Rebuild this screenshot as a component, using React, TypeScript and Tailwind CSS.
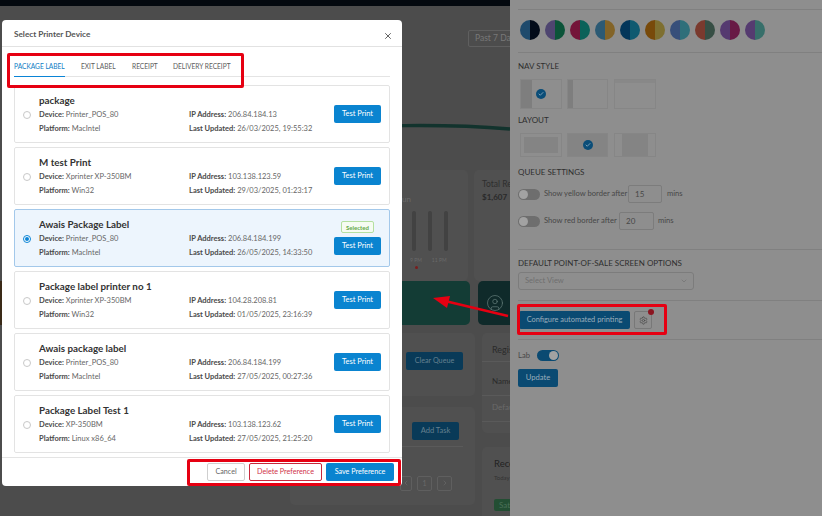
import { Check, ChevronDown, ChevronLeft, ChevronRight, CircleUser, Settings, X } from 'lucide-react';

const printers = [
  { name: 'package', device: 'Printer_POS_80', platform: 'MacIntel', ip: '206.84.184.13', updated: '26/03/2025, 19:55:32' },
  { name: 'M test Print', device: 'Xprinter XP-350BM', platform: 'Win32', ip: '103.138.123.59', updated: '29/03/2025, 01:23:17' },
  { name: 'Awais Package Label', device: 'Printer_POS_80', platform: 'MacIntel', ip: '206.84.184.199', updated: '26/05/2025, 14:33:50', selected: true },
  { name: 'Package label printer no 1', device: 'Xprinter XP-350BM', platform: 'Win32', ip: '104.28.208.81', updated: '01/05/2025, 23:16:39' },
  { name: 'Awais package label', device: 'Printer_POS_80', platform: 'MacIntel', ip: '206.84.184.199', updated: '27/05/2025, 00:27:36' },
  { name: 'Package Label Test 1', device: 'XP-350BM', platform: 'Linux x86_64', ip: '103.138.123.62', updated: '27/05/2025, 21:25:20' },
];

const swatches = [
  ['#1e4a6c', '#030b1a'],
  ['#4e4570', '#0b5439'],
  ['#741439', '#0a6259'],
  ['#2c5a74', '#836428'],
  ['#03365a', '#0f5a70'],
  ['#784a0a', '#7e6f30'],
  ['#374f7a', '#2f6f7a'],
  ['#7a3a2e', '#374f45'],
  ['#553a70', '#681a45'],
  ['#553b70', '#376f6a'],
];

function Field({ label, value }: { label: string; value: string }) {
  return (
    <div className="h-[14px] leading-[14px] whitespace-nowrap text-[7.5px] text-[#666]">
      <span className="font-bold text-[#4a4a4a]">{label}:</span> {value}
    </div>
  );
}

function PrinterCard({ p }: { p: (typeof printers)[number] }) {
  return (
    <div
      className={`h-[58px] shrink-0 flex items-center rounded-[2px] border pl-[8px] pr-[8px] ${
        p.selected ? 'bg-[#edf5fd] border-[#a3c8ea]' : 'bg-white border-[#e3e3e3]'
      }`}
    >
      <div
        className={`w-[8px] h-[8px] rounded-full shrink-0 mt-[2px] flex items-center justify-center ${
          p.selected ? 'border border-[#0a84d6] bg-white' : 'border border-[#c8c8c8]'
        }`}
      >
        {p.selected && <div className="w-[4px] h-[4px] rounded-full bg-[#0a84d6]" />}
      </div>
      <div className="ml-[8px] w-[150px] shrink-0">
        <div className="h-[15px] leading-[14px] text-[9.8px] font-bold text-[#333] whitespace-nowrap">{p.name}</div>
        <Field label="Device" value={p.device} />
        <Field label="Platform" value={p.platform} />
      </div>
      <div className="pt-[15px] w-[145px] shrink-0">
        <Field label="IP Address" value={p.ip} />
        <Field label="Last Updated" value={p.updated} />
      </div>
      <div className="w-[47px] shrink-0 flex flex-col items-center">
        {p.selected && (
          <div className="w-[33px] h-[12px] mb-[4px] rounded-[2px] border border-[#b5e0a0] bg-[#f6fcf2] text-[6px] font-bold text-[#62a845] flex items-center justify-center">
            Selected
          </div>
        )}
        <button className="w-[47px] h-[18px] rounded-[2px] bg-[#0a84d0] text-white text-[7.5px]">Test Print</button>
      </div>
    </div>
  );
}

function Toggle({ on }: { on?: boolean }) {
  return (
    <div className={`w-[22px] h-[11px] rounded-full flex items-center px-[1px] ${on ? 'bg-[#0a4a72] justify-end' : 'bg-[#6e6e6e]'}`}>
      <div className="w-[9px] h-[9px] rounded-full bg-[#a2a2a2]" />
    </div>
  );
}

function CheckDot() {
  return (
    <div className="w-[10px] h-[10px] rounded-full bg-[#0a4d78] flex items-center justify-center">
      <Check size={6} strokeWidth={3} className="text-[#9fb9ca]" />
    </div>
  );
}

function Dashboard() {
  return (
    <div className="w-[510px] h-[516px] shrink-0 overflow-hidden flex flex-col bg-[#4c4c4c] text-[#2c2c2c]">
      <div className="h-[6px] shrink-0 bg-[#04090f]" />
      <div className="ml-[468px] mt-[24px] w-[70px] h-[17px] shrink-0 rounded-[2px] border border-[#5f5f5f] pl-[6px] text-[8.5px] leading-[15px] text-[#787878] whitespace-nowrap">
        Past 7 Days
      </div>
      <svg className="mt-[53px] shrink-0" width="510" height="60" viewBox="0 0 510 60">
        <path d="M300 32 C 360 24, 450 24, 510 29" fill="none" stroke="#12332d" strokeWidth="3.5" />
      </svg>

      <div className="mt-[10px] h-[111px] shrink-0 flex gap-[6px] ml-[290px]">
        <div className="w-[178px] shrink-0 rounded-[5px] bg-[#505050] pl-[112px] pt-[24px]">
          <div className="h-[10px] text-[8px] leading-[10px] text-[#6a6a6a]">un</div>
          <div className="mt-[7px] flex gap-[12px] pl-[10px]">
            <div className="w-[4px] h-[40px] rounded-full bg-[#424242]" />
            <div className="w-[4px] h-[40px] rounded-full bg-[#424242]" />
            <div className="w-[4px] h-[40px] rounded-full bg-[#424242]" />
          </div>
          <div className="mt-[6px] flex gap-[10px] pl-[8px] text-[5px] text-[#6a6a6a] whitespace-nowrap">
            <span>9 PM</span>
            <span>11 PM</span>
          </div>
          <div className="w-[3px] h-[3px] ml-[13px] mt-[1px] rounded-full bg-[#7a1c1c]" />
        </div>
        <div className="w-[120px] shrink-0 rounded-[5px] bg-[#505050] pl-[8px] pt-[9px]">
          <div className="text-[8.5px] leading-[11px] text-[#2e2e2e] whitespace-nowrap">Total Revenue</div>
          <div className="mt-[2px] text-[8px] leading-[11px] font-bold text-[#2a2a2a]">$1,607</div>
        </div>
      </div>

      <div className="h-[44px] shrink-0 flex">
        <div className="w-[2px] h-[44px] shrink-0 bg-[#3a2a18]" />
        <div className="ml-[288px] w-[180px] shrink-0 rounded-[5px] bg-[#133c35]" />
        <div className="ml-[8px] w-[60px] shrink-0 rounded-[5px] bg-[#0f2a2a] pl-[8px] flex items-center">
          <CircleUser size={18} strokeWidth={1} className="text-[#5f7876]" />
        </div>
      </div>

      <div className="mt-[8px] flex gap-[7px] ml-[290px]">
        <div className="w-[185px] shrink-0 flex flex-col">
          <div className="h-[63px] rounded-[5px] bg-[#505050] pl-[116px] pt-[12px]">
            <button className="w-[57px] h-[18px] rounded-[2px] bg-[#093a58] text-[7.2px] text-[#64808f]">Clear Queue</button>
          </div>
          <div className="mt-[11px] h-[98px] rounded-[5px] bg-[#505050] pl-[122px] pt-[8px]">
            <button className="w-[47px] h-[18px] rounded-[2px] bg-[#093a58] text-[7.5px] text-[#64808f]">Add Task</button>
            <div className="mt-[6px] h-[1px] w-[63px] -ml-[12px] bg-[#5a5a5a]" />
            <div className="mt-[29px] -ml-[12px] flex gap-[5px] text-[#6a6a6a]">
              <div className="w-[12px] h-[15px] rounded-[2px] border border-[#5f5f5f] flex items-center justify-center">
                <ChevronLeft size={8} />
              </div>
              <div className="w-[15px] h-[15px] rounded-[2px] border border-[#5f5f5f] text-[7px] leading-[13px] text-center">1</div>
              <div className="w-[15px] h-[15px] rounded-[2px] border border-[#5f5f5f] flex items-center justify-center">
                <ChevronRight size={8} />
              </div>
            </div>
          </div>
        </div>
        <div className="w-[100px] shrink-0 flex flex-col">
          <div className="h-[100px] rounded-[5px] bg-[#505050] text-[8px] whitespace-nowrap">
            <div className="h-[29px] pl-[10px] pt-[11px] text-[9px] leading-[11px] text-[#2a2a2a] border-b border-[#5a5a5a]">Register</div>
            <div className="h-[34px] pl-[10px] leading-[38px] text-[#2a2a2a] border-b border-[#5a5a5a]">Name</div>
            <div className="h-[26px] pl-[10px] leading-[22px] text-[#6a6a6a] border-b border-[#5a5a5a]">Default</div>
          </div>
          <div className="mt-[14px] h-[80px] rounded-[5px] bg-[#505050] pl-[12px] pt-[11px] whitespace-nowrap">
            <div className="text-[9.5px] leading-[11px] text-[#222]">Recent</div>
            <div className="mt-[5px] text-[6px] leading-[8px] text-[#333]">Today</div>
            <div className="mt-[17px] w-[40px] h-[12px] rounded-[2px] bg-[#234e33] text-[8px] leading-[12px] pl-[5px] text-[#4a7058]">Saturday</div>
          </div>
        </div>
      </div>
    </div>
  );
}

function SettingsPanel() {
  return (
    <div className="flex-1 h-[516px] bg-[#8e8e8e] pl-[8px] pt-[9px] text-[#2e2e2e] text-[9px] overflow-hidden">
      <div className="h-[1px] bg-[#808080]" />
      <div className="mt-[10px] ml-[2px] flex gap-[5px]">
        {swatches.map(([a, b], i) => (
          <div key={i} className="w-[20px] h-[20px] rounded-full overflow-hidden flex">
            <div className="w-[10px] h-[20px]" style={{ background: a }} />
            <div className="w-[10px] h-[20px]" style={{ background: b }} />
          </div>
        ))}
      </div>
      <div className="mt-[12px] h-[1px] bg-[#808080]" />

      <div className="mt-[7px] h-[12px] leading-[12px] text-[8px]">NAV STYLE</div>
      <div className="mt-[7px] ml-[2px] h-[30px] flex gap-[5px]">
        <div className="w-[42px] h-[30px] border border-[#868686] flex">
          <div className="w-[11px] bg-[#7e7e7e]" />
          <div className="flex-1 pt-[9px] pl-[4px]">
            <CheckDot />
          </div>
        </div>
        <div className="w-[41px] h-[30px] border border-[#868686] flex">
          <div className="w-[5px] bg-[#7e7e7e]" />
        </div>
        <div className="w-[42px] h-[30px] ml-[1px] border border-[#868686]">
          <div className="h-[3px] bg-[#888888]" />
        </div>
      </div>

      <div className="mt-[5px] h-[12px] leading-[12px] text-[8px]">LAYOUT</div>
      <div className="mt-[7px] ml-[2px] h-[24px] flex gap-[5px]">
        <div className="w-[42px] h-[24px] border border-[#868686] p-[3px]">
          <div className="w-full h-full bg-[#848484]" />
        </div>
        <div className="w-[41px] h-[24px] border border-[#868686] bg-[#848484] flex items-center justify-center">
          <CheckDot />
        </div>
        <div className="w-[42px] h-[24px] ml-[1px] border border-[#868686] flex justify-center">
          <div className="w-[26px] h-full bg-[#848484]" />
        </div>
      </div>

      <div className="mt-[9px] h-[12px] leading-[12px] text-[8px]">QUEUE SETTINGS</div>
      <div className="mt-[7px] h-[18px] flex items-center">
        <Toggle />
        <span className="ml-[4px] w-[80px] whitespace-nowrap text-[7.6px] text-[#474747]">Show yellow border after</span>
        <div className="ml-[4px] w-[34px] h-[18px] rounded-[2px] border border-[#7c7c7c] pl-[6px] leading-[16px] text-[8px] text-[#474747]">15</div>
        <span className="ml-[5px] text-[7.6px] text-[#474747]">mins</span>
      </div>
      <div className="mt-[9px] h-[18px] flex items-center">
        <Toggle />
        <span className="ml-[4px] w-[71px] whitespace-nowrap text-[7.6px] text-[#474747]">Show red border after</span>
        <div className="ml-[4px] w-[35px] h-[18px] rounded-[2px] border border-[#7c7c7c] pl-[6px] leading-[16px] text-[8px] text-[#474747]">20</div>
        <span className="ml-[4px] text-[7.6px] text-[#474747]">mins</span>
      </div>
      <div className="mt-[19px] h-[1px] bg-[#808080]" />

      <div className="mt-[7px] h-[12px] leading-[12px] text-[8px] whitespace-nowrap">DEFAULT POINT-OF-SALE SCREEN OPTIONS</div>
      <div className="mt-[3px] w-[176px] h-[18px] rounded-[3px] border border-[#7c7c7c] pl-[6px] pr-[5px] flex items-center justify-between text-[7.6px] text-[#6f6f6f]">
        <span>Select View</span>
        <ChevronDown size={8} />
      </div>
      <div className="mt-[10px] h-[1px] bg-[#808080]" />

      <div className="mt-[10px] h-[18px] flex ml-[1px]">
        <button className="w-[111px] h-[18px] rounded-[2px] bg-[#0a4a72] text-[7.4px] text-[#9aaebc] whitespace-nowrap">Configure automated printing</button>
        <div className="relative ml-[4px] w-[18px] h-[18px] rounded-[2px] border border-[#787878] flex items-center justify-center">
          <Settings size={9} className="text-[#4c4c4c]" />
          <div className="absolute -top-[3px] -right-[3px] w-[6px] h-[6px] rounded-full bg-[#8c1520]" />
        </div>
      </div>
      <div className="mt-[10px] h-[1px] bg-[#808080]" />

      <div className="mt-[10px] h-[11px] flex items-center">
        <span className="w-[19px] text-[7.6px] text-[#474747]">Lab</span>
        <Toggle on />
      </div>
      <button className="mt-[8px] block w-[40px] h-[18px] rounded-[2px] bg-[#0a4a72] text-[7.6px] text-[#9aaebc]">Update</button>
    </div>
  );
}

function PrinterModal() {
  return (
    <div className="absolute left-[2px] top-[20px] w-[400px] h-[466px] rounded-[4px] bg-white flex flex-col overflow-hidden">
      <div className="h-[27px] shrink-0 border-b border-[#e2e2e2] pl-[12px] pr-[9px] flex items-center justify-between">
        <span className="mt-[2px] text-[8.2px] font-bold text-[#555]">Select Printer Device</span>
        <X size={10} className="text-[#444] mt-[5px]" />
      </div>
      <div className="mt-[10px] mx-[12px] h-[20px] shrink-0 border-b border-[#e4e4e4] flex gap-[16px] text-[6.6px] text-[#5c5c5c] whitespace-nowrap">
        <div className="h-[20px] w-[51px] border-b border-[#0a84d6] text-[#0a7cc4] leading-[18px]">PACKAGE LABEL</div>
        <div className="w-[35px] leading-[18px]">EXIT LABEL</div>
        <div className="w-[25px] leading-[18px]">RECEIPT</div>
        <div className="leading-[18px]">DELIVERY RECEIPT</div>
      </div>
      <div className="mt-[8px] mx-[12px] flex flex-col gap-[4px] shrink-0">
        {printers.map((p) => (
          <PrinterCard key={p.name} p={p} />
        ))}
      </div>
      <div className="mt-[4px] h-[29px] shrink-0 border-t border-[#e4e4e4] pr-[8px] pt-[5px] flex justify-end gap-[4px] text-[7.2px]">
        <button className="w-[38px] h-[18px] rounded-[2px] border border-[#cfcfcf] text-[#666]">Cancel</button>
        <button className="w-[73px] h-[18px] rounded-[2px] border border-[#c8283c] text-[#d0334a]">Delete Preference</button>
        <button className="w-[68px] h-[18px] rounded-[2px] bg-[#0a84d0] text-white">Save Preference</button>
      </div>
    </div>
  );
}

export default function App() {
  return (
    <div className="relative w-[822px] h-[516px] overflow-hidden flex font-['Lato',sans-serif]">
      <Dashboard />
      <SettingsPanel />
      <PrinterModal />

      {/* red annotations drawn over the screenshot */}
      <div className="absolute left-[7px] top-[53px] w-[237px] h-[35px] rounded-[2px] border-[3px] border-[#e60012]" />
      <div className="absolute left-[187px] top-[459px] w-[214px] h-[27px] rounded-[2px] border-[3px] border-[#e60012]" />
      <div className="absolute left-[517px] top-[304px] w-[150px] h-[31px] rounded-[2px] border-[3px] border-[#e60012]" />
      <svg className="absolute left-[425px] top-[290px]" width="90" height="40" viewBox="0 0 90 40">
        <line x1="83" y1="26" x2="20" y2="11" stroke="#e60012" strokeWidth="2.5" />
        <polygon points="8,8 25,6 22,18" fill="#e60012" />
      </svg>
    </div>
  );
}
